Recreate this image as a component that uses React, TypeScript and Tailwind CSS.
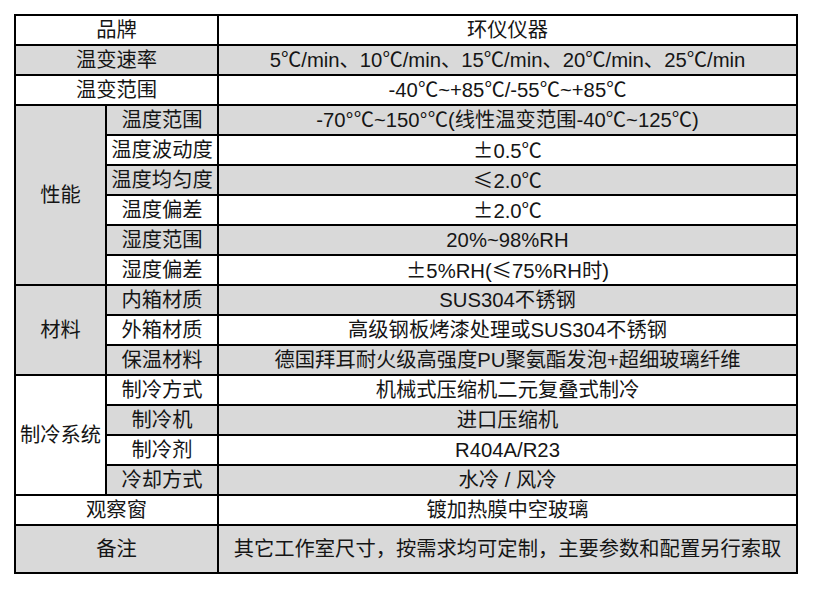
import React from "react";

type Row = { group?: string; span?: number; groupGray?: boolean; label: string; value: string; gray: boolean; solo?: boolean; tall?: boolean };

const rows: Row[] = [
  { label: "品牌", value: "环仪仪器", gray: false, solo: true },
  { label: "温变速率", value: "5℃/min、10℃/min、15℃/min、20℃/min、25℃/min", gray: true, solo: true },
  { label: "温变范围", value: "-40℃~+85℃/-55℃~+85℃", gray: false, solo: true },
  { group: "性能", span: 6, groupGray: true, label: "温度范围", value: "-70°℃~150°℃(线性温变范围-40℃~125℃)", gray: true },
  { label: "温度波动度", value: "±0.5℃", gray: false },
  { label: "温度均匀度", value: "≤2.0℃", gray: true },
  { label: "温度偏差", value: "±2.0℃", gray: false },
  { label: "湿度范围", value: "20%~98%RH", gray: true },
  { label: "湿度偏差", value: "±5%RH(≤75%RH时)", gray: false },
  { group: "材料", span: 3, groupGray: true, label: "内箱材质", value: "SUS304不锈钢", gray: true },
  { label: "外箱材质", value: "高级钢板烤漆处理或SUS304不锈钢", gray: false },
  { label: "保温材料", value: "德国拜耳耐火级高强度PU聚氨酯发泡+超细玻璃纤维", gray: true },
  { group: "制冷系统", span: 4, groupGray: false, label: "制冷方式", value: "机械式压缩机二元复叠式制冷", gray: false },
  { label: "制冷机", value: "进口压缩机", gray: true },
  { label: "制冷剂", value: "R404A/R23", gray: false },
  { label: "冷却方式", value: "水冷 / 风冷", gray: true },
  { label: "观察窗", value: "镀加热膜中空玻璃", gray: false, solo: true },
  { label: "备注", value: "其它工作室尺寸，按需求均可定制，主要参数和配置另行索取", gray: true, solo: true, tall: true },
];

// ± and ≤ come out full width in the CJK face, as in the picture
function Value({ text }: { text: string }) {
  return (
    <>
      {text.split(/([±≤])/).map((part, i) =>
        part === "±" || part === "≤" ? (
          <span key={i} className="font-['Noto_Sans_CJK_SC']">{part}</span>
        ) : (
          part
        )
      )}
    </>
  );
}

export default function App() {
  const cell = "border-2 border-black text-center p-0 leading-none whitespace-nowrap";
  return (
    <div className="w-[814px] h-[589px] bg-white pt-[14px] pl-[14px]" style={{ fontFamily: '"Liberation Sans", "Noto Sans CJK SC", sans-serif' }}>
      <table className="border-collapse table-fixed w-[784px] text-[20.3px] text-[#151515]">
        <colgroup>
          <col className="w-[91px]" />
          <col className="w-[112px]" />
          <col />
        </colgroup>
        <tbody>
          {rows.map((r, i) => (
            <tr key={i} className={r.tall ? "h-[48px]" : "h-[30px]"}>
              {r.solo ? (
                <td colSpan={2} className={`${cell} ${r.gray ? "bg-[#d9d9d9]" : "bg-white"}`}>{r.label}</td>
              ) : (
                <>
                  {r.group && (
                    <td rowSpan={r.span} className={`${cell} ${r.groupGray ? "bg-[#d9d9d9]" : "bg-white"}`}>{r.group}</td>
                  )}
                  <td className={`${cell} ${r.gray ? "bg-[#d9d9d9]" : "bg-white"}`}>{r.label}</td>
                </>
              )}
              <td className={`${cell} ${r.gray ? "bg-[#d9d9d9]" : "bg-white"}`}>
                <Value text={r.value} />
              </td>
            </tr>
          ))}
        </tbody>
      </table>
    </div>
  );
}
